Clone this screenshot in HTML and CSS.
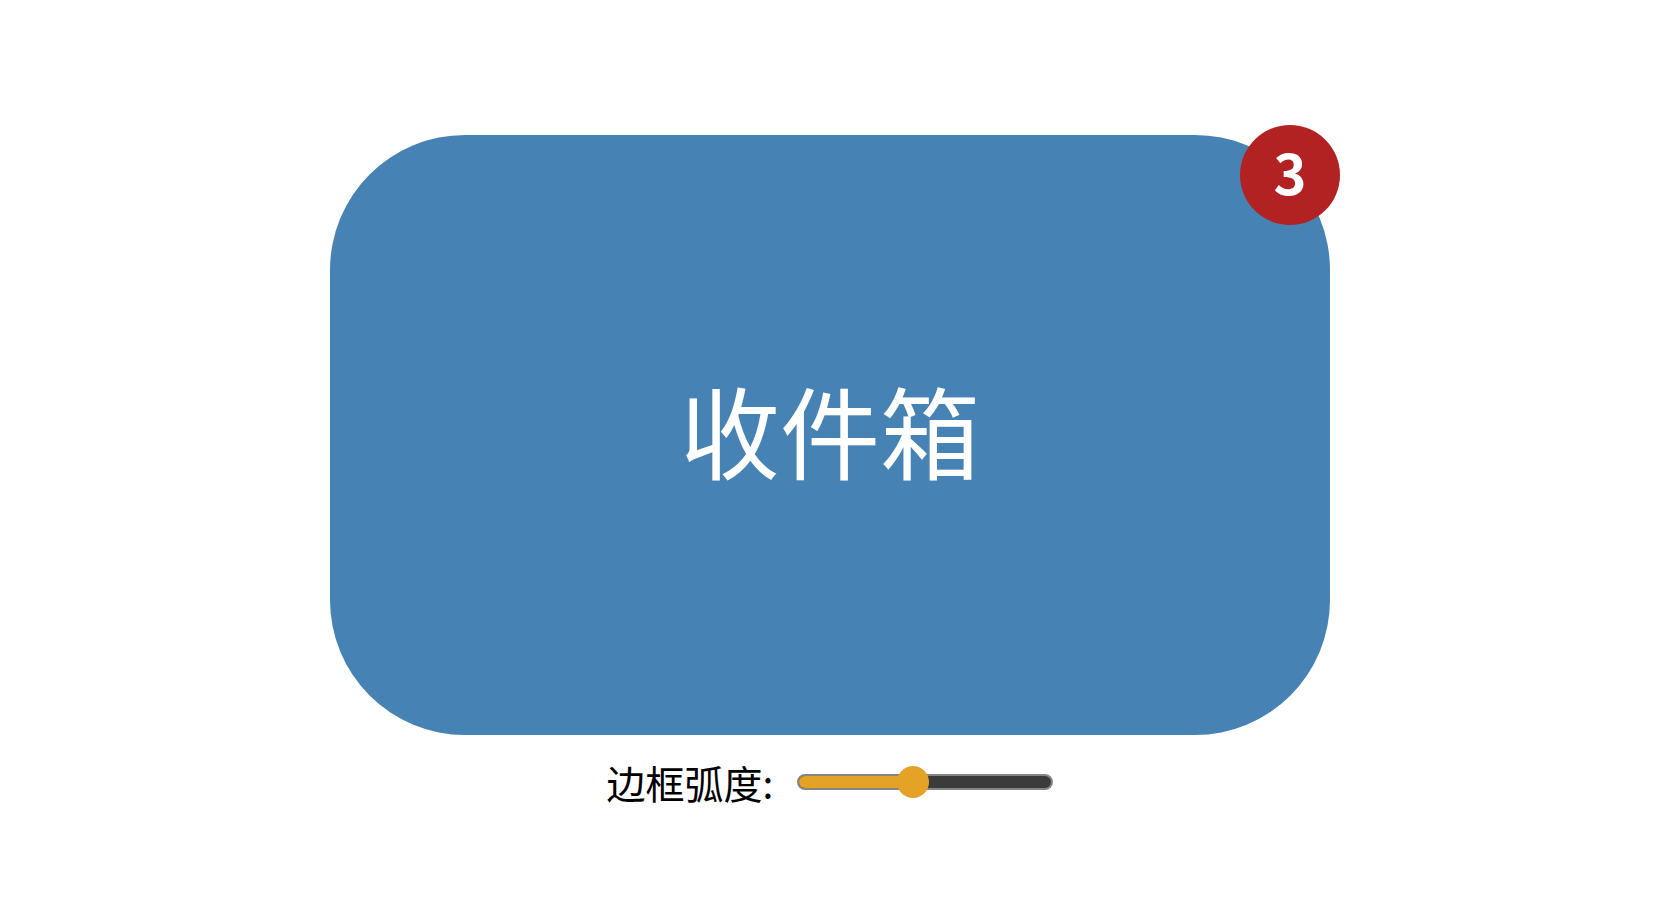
FILE: index.html
```html
<!DOCTYPE html>
<html lang="zh">
<head>
<meta charset="utf-8">
<title>收件箱</title>
<link rel="stylesheet" href="styles.css">
</head>
<body>
<main class="page">
  <div class="inbox">
    <span class="inbox-title">收件箱</span>
    <span class="badge">3</span>
  </div>
  <div class="controls">
    <label class="controls-label">边框弧度:</label>
    <div class="slider">
      <div class="slider-track">
        <div class="slider-fill" style="width: 45%"></div>
      </div>
      <div class="slider-thumb" style="left: 45%"></div>
    </div>
  </div>
</main>
</body>
</html>
```

FILE: styles.css
```css
html, body {
  margin: 0;
  padding: 0;
  background: #ffffff;
}
body {
  font-family: "Noto Sans CJK SC", "Noto Sans", sans-serif;
  width: 1660px;
  height: 898px;
  overflow: hidden;
}
.page {
  display: flex;
  flex-direction: column;
  align-items: center;
  padding-top: 135px;
}
.inbox {
  position: relative;
  width: 1000px;
  height: 600px;
  background: #4682b4;
  border-radius: 135px;
  display: flex;
  align-items: center;
  justify-content: center;
}
.inbox-title {
  color: #ffffff;
  font-size: 100px;
  line-height: 1;
  padding-bottom: 12px;
}
.badge {
  position: absolute;
  top: -10px;
  right: -10px;
  width: 100px;
  height: 100px;
  border-radius: 50%;
  background: #b22222;
  color: #ffffff;
  font-weight: 700;
  font-size: 56px;
  line-height: 92px;
  text-align: center;
}
.controls {
  display: flex;
  align-items: center;
  gap: 24px;
  margin-top: 19px;
}
.controls-label {
  font-size: 39px;
  color: #000000;
}
.slider {
  position: relative;
  width: 256px;
  height: 32px;
  display: flex;
  align-items: center;
}
.slider-track {
  width: 100%;
  height: 16px;
  box-sizing: border-box;
  border: 2px solid #858585;
  border-radius: 8px;
  background: #3b3b3b;
  overflow: hidden;
}
.slider-fill {
  height: 100%;
  background: #e4a227;
}
.slider-thumb {
  position: absolute;
  top: 0;
  width: 32px;
  height: 32px;
  border-radius: 50%;
  background: #e4a227;
  transform: translateX(-50%);
}
```
